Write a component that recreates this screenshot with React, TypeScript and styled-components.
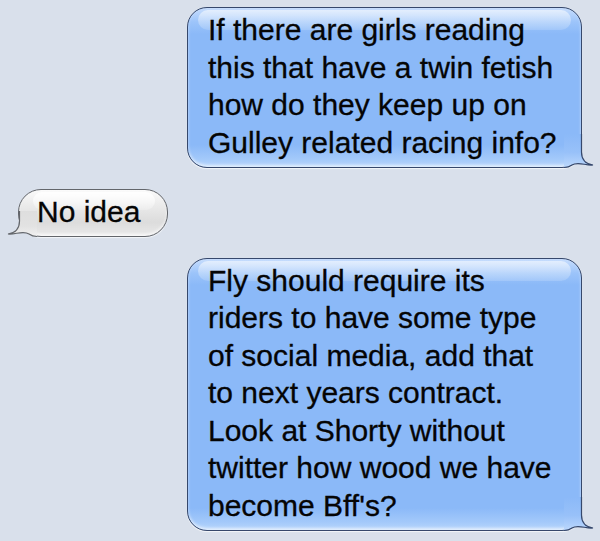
import React from "react";
import styled, { createGlobalStyle, css } from "styled-components";

const Global = createGlobalStyle`
  html, body { margin: 0; padding: 0; }
  body {
    background: #d9e0eb;
    font-family: "Liberation Sans", Arial, Helvetica, sans-serif;
  }
`;

const Thread = styled.div`
  display: flex;
  flex-direction: column;
  gap: 21px;
  padding: 7px 18px 10px 18px;
  width: 600px;
  height: 541px;
  box-sizing: border-box;
  overflow: hidden;
`;

const Row = styled.div<{ $mine: boolean }>`
  display: flex;
  justify-content: ${(p) => (p.$mine ? "flex-end" : "flex-start")};
`;

const Bubble = styled.div<{ $mine: boolean }>`
  position: relative;
  box-sizing: border-box;
  font-size: 30px;
  line-height: 37.5px;
  color: #050505;
  -webkit-text-stroke: 0.3px #050505;
  white-space: pre-line;
  padding: 3px 27px 5.5px 18px;
  border: 1px solid #63666b;
  border-radius: 23px;
  background: linear-gradient(
    to bottom,
    #fbfbfb 0%,
    #ececec 30%,
    #dcdcdc 70%,
    #e6e6e6 92%,
    #f0f0f0 100%
  );
  box-shadow: 0 1px 1px rgba(255, 255, 255, 0.7),
    inset 0 -2px 3px rgba(255, 255, 255, 0.6);

  ${(p) =>
    p.$mine &&
    css`
      width: 395px;
      padding: 3px 18px 5.5px 20px;
      border-color: #36486c;
      border-radius: 20px;
      background: linear-gradient(
        to bottom,
        #c7ddfd 0px,
        #9cc4fa 14px,
        #8bb9f8 26px,
        #8bb9f8 calc(100% - 22px),
        #a3c9fa calc(100% - 8px),
        #b8d6fb 100%
      );
    `}

  &::before {
    content: "";
    position: absolute;
    top: 2px;
    left: ${(p) => (p.$mine ? "10px" : "14px")};
    right: ${(p) => (p.$mine ? "10px" : "12px")};
    height: ${(p) => (p.$mine ? "20px" : "18px")};
    border-radius: 12px;
    background: ${(p) =>
      p.$mine
        ? "linear-gradient(to bottom, rgba(255,255,255,0.55), rgba(255,255,255,0.15))"
        : "linear-gradient(to bottom, rgba(255,255,255,0.9), rgba(255,255,255,0.2))"};
    pointer-events: none;
  }
`;

const Text = styled.span`
  position: relative;
`;

const TailSvg = styled.svg<{ $mine: boolean }>`
  position: absolute;
  bottom: -1px;
  ${(p) =>
    p.$mine
      ? css`
          right: -12.5px;
        `
      : css`
          left: -12.5px;
          transform: scaleX(-1);
        `}
  overflow: visible;
`;

function Tail({ mine, h }: { mine: boolean; h: number }) {
  const fillPath = `M0,0 L17.5,0 L17.5,${h - 16} C17.5,${h - 8} 22,${h - 4} 29,${h - 3} C22,${h - 2} 14,${h - 7} 8,${h - 3} C6,${h - 1.5} 3,${h - 0.5} 0,${h - 0.5} Z`;
  const strokePath = `M17.5,0 L17.5,${h - 16} C17.5,${h - 8} 22,${h - 4} 29,${h - 3} C22,${h - 2} 14,${h - 7} 8,${h - 3} C6,${h - 1.5} 3,${h - 0.5} 0,${h - 0.5}`;
  const id = mine ? "tailBlue" : "tailGray";
  return (
    <TailSvg $mine={mine} width={30} height={h} viewBox={`0 0 30 ${h}`}>
      <defs>
        <linearGradient id={id} x1="0" y1="0" x2="0" y2="1">
          {mine ? (
            <>
              <stop offset="0%" stopColor="#8bb9f8" />
              <stop offset="55%" stopColor="#98c1f9" />
              <stop offset="100%" stopColor="#bcd8fc" />
            </>
          ) : (
            <>
              <stop offset="0%" stopColor="#dedede" />
              <stop offset="60%" stopColor="#e2e2e2" />
              <stop offset="100%" stopColor="#f1f1f1" />
            </>
          )}
        </linearGradient>
      </defs>
      <path d={fillPath} fill={`url(#${id})`} />
      <path
        d={strokePath}
        fill="none"
        stroke={mine ? "#36486c" : "#63666b"}
        strokeWidth={1.2}
      />
    </TailSvg>
  );
}

type Msg = { mine: boolean; lines: string[] };

const messages: Msg[] = [
  {
    mine: true,
    lines: [
      "If there are girls reading",
      "this that have a twin fetish",
      "how do they keep up on",
      "Gulley related racing info?",
    ],
  },
  { mine: false, lines: ["No idea"] },
  {
    mine: true,
    lines: [
      "Fly should require its",
      "riders to have some type",
      "of social media, add that",
      "to next years contract.",
      "Look at Shorty without",
      "twitter how wood we have",
      "become Bff's?",
    ],
  },
];

export default function App() {
  return (
    <>
      <Global />
      <Thread>
        {messages.map((m, i) => (
          <Row key={i} $mine={m.mine}>
            <Bubble $mine={m.mine}>
              <Text>{m.lines.join("\n")}</Text>
              <Tail mine={m.mine} h={m.mine ? 34 : 26} />
            </Bubble>
          </Row>
        ))}
      </Thread>
    </>
  );
}
